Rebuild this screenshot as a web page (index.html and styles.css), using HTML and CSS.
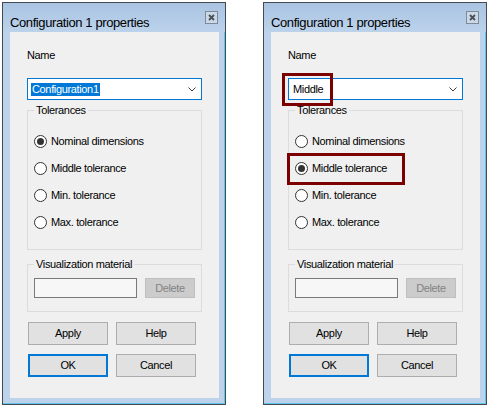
FILE: index.html
```html
<!DOCTYPE html>
<html>
<head>
<meta charset="utf-8">
<link rel="stylesheet" href="styles.css">
</head>
<body>
<div class="page">
  <div class="window">
    <div class="titlebar">
      <span class="title">Configuration 1 properties</span>
      <span class="close"><svg width="13" height="13" viewBox="0 0 13 13"><rect x="0.5" y="0.5" width="12" height="12" fill="#cad8e8" stroke="#7f8a97"/><path d="M4 4 L9 9 M9 4 L4 9" stroke="#4a4f55" stroke-width="1.8"/></svg></span>
    </div>
    <div class="body">
      <div class="label">Name</div>
      <div class="combo"><span class="sel">Configuration1</span><svg class="chev" width="8" height="5" viewBox="0 0 8 5"><path d="M0.5 0.5 L4 4 L7.5 0.5" fill="none" stroke="#3c3c3c"/></svg></div>
      <div class="group tol">
        <span class="legend">Tolerances</span>
        <div class="radio"><span class="circle on"></span>Nominal dimensions</div>
        <div class="radio"><span class="circle"></span>Middle tolerance</div>
        <div class="radio"><span class="circle"></span>Min. tolerance</div>
        <div class="radio"><span class="circle"></span>Max. tolerance</div>
      </div>
      <div class="group vis">
        <span class="legend">Visualization material</span>
        <div class="visrow"><div class="textbox"></div><div class="btn disabled">Delete</div></div>
      </div>
      <div class="buttons">
        <div class="btn">Apply</div>
        <div class="btn">Help</div>
        <div class="btn default">OK</div>
        <div class="btn">Cancel</div>
      </div>
    </div>
  </div>
  <div class="window">
    <div class="titlebar">
      <span class="title">Configuration 1 properties</span>
      <span class="close"><svg width="13" height="13" viewBox="0 0 13 13"><rect x="0.5" y="0.5" width="12" height="12" fill="#cad8e8" stroke="#7f8a97"/><path d="M4 4 L9 9 M9 4 L4 9" stroke="#4a4f55" stroke-width="1.8"/></svg></span>
    </div>
    <div class="body">
      <div class="label">Name</div>
      <div class="combo"><span class="plain">Middle</span><svg class="chev" width="8" height="5" viewBox="0 0 8 5"><path d="M0.5 0.5 L4 4 L7.5 0.5" fill="none" stroke="#3c3c3c"/></svg></div>
      <div class="group tol">
        <span class="legend">Tolerances</span>
        <div class="radio"><span class="circle"></span>Nominal dimensions</div>
        <div class="radio"><span class="circle on"></span>Middle tolerance</div>
        <div class="radio"><span class="circle"></span>Min. tolerance</div>
        <div class="radio"><span class="circle"></span>Max. tolerance</div>
      </div>
      <div class="group vis">
        <span class="legend">Visualization material</span>
        <div class="visrow"><div class="textbox"></div><div class="btn disabled">Delete</div></div>
      </div>
      <div class="buttons">
        <div class="btn">Apply</div>
        <div class="btn">Help</div>
        <div class="btn default">OK</div>
        <div class="btn">Cancel</div>
      </div>
      <div class="mark mark-name"></div>
      <div class="mark mark-radio"></div>
    </div>
  </div>
</div>
</body>
</html>
```

FILE: styles.css
```css
* { box-sizing: border-box; }
html, body { margin: 0; padding: 0; background: #ffffff; }
body {
  font-family: "Liberation Sans", Arial, sans-serif;
  font-size: 11px;
  letter-spacing: -0.35px;
  color: #000;
}
.page {
  display: flex;
  gap: 37px;
  padding: 2px;
}
.window {
  width: 224px;
  height: 403px;
  border: 1px solid #444a50;
  background: #bdd3ec;
  box-shadow: inset -1px -1px 0 #62c6ea;
  display: flex;
  flex-direction: column;
}
.titlebar {
  height: 29px;
  display: flex;
  justify-content: space-between;
  align-items: flex-start;
  padding: 0 7px 0 7px;
  background: linear-gradient(#a9c4e2, #bcd2eb);
}
.title {
  font-size: 13px;
  letter-spacing: -0.4px;
  line-height: 15px;
  padding-top: 12px;
}
.close {
  margin-top: 8px;
  width: 13px;
  height: 13px;
  display: block;
}
.close svg { display: block; }
.body {
  position: relative;
  margin: 0 6px 6px 7px;
  flex: 1;
  background: #f0f0f0;
  padding: 17px 17px 0 17px;
}
.label { line-height: 13px; }
.combo {
  margin-top: 16px;
  height: 22px;
  border: 1px solid #0078d7;
  background: #fff;
  display: flex;
  align-items: center;
  justify-content: space-between;
  padding: 0 5px 0 3px;
  line-height: 13px;
}
.sel {
  background: #0078d7;
  color: #fff;
  padding: 0 1px;
}
.plain { padding-left: 1px; }
.chev { display: block; }
.group {
  position: relative;
  border: 1px solid #dcdcdc;
}
.legend {
  position: absolute;
  left: 6px;
  top: -7px;
  padding: 0 2px;
  background: #f0f0f0;
  line-height: 13px;
}
.tol {
  margin-top: 10px;
  height: 140px;
  padding: 17px 6px 0 6px;
}
.radio {
  height: 27px;
  display: flex;
  align-items: center;
  gap: 4px;
  line-height: 13px;
}
.circle {
  width: 13px;
  height: 13px;
  border: 1px solid #333;
  border-radius: 50%;
  background: #fff;
  display: flex;
  align-items: center;
  justify-content: center;
  flex: none;
}
.circle.on::after {
  content: "";
  width: 7px;
  height: 7px;
  border-radius: 50%;
  background: #333;
}
.vis {
  margin-top: 14px;
  height: 48px;
  padding: 13px 6px 0 6px;
}
.visrow {
  display: flex;
  gap: 8px;
}
.textbox {
  width: 103px;
  height: 20px;
  border: 1px solid #7a7a7a;
  background: #f7f7f7;
}
.btn {
  height: 23px;
  border: 1px solid #adadad;
  background: #e1e1e1;
  display: flex;
  align-items: center;
  justify-content: center;
  line-height: 13px;
}
.btn.disabled {
  width: 50px;
  height: 20px;
  background: #cccccc;
  border-color: #bfbfbf;
  color: #838383;
}
.btn.default {
  border: 2px solid #0078d7;
}
.buttons {
  margin-top: 10px;
  padding-left: 1px;
  display: grid;
  grid-template-columns: 80px 80px;
  column-gap: 8px;
  row-gap: 9px;
}
.mark {
  position: absolute;
  border: 3px solid #7b0000;
}
.mark-name {
  left: 11px;
  top: 41px;
  width: 51px;
  height: 33px;
}
.mark-radio {
  left: 16px;
  top: 121px;
  width: 118px;
  height: 32px;
}
```
